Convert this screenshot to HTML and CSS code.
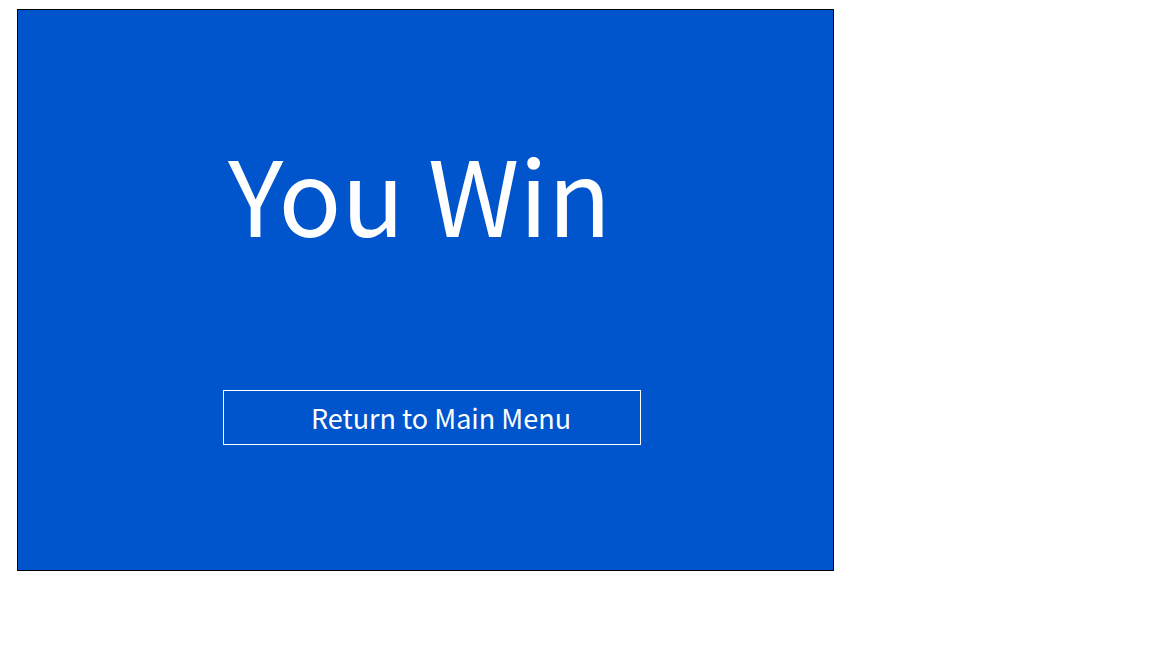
FILE: index.html
```html
<!DOCTYPE html>
<html>
<head>
<meta charset="utf-8">
<link rel="stylesheet" href="styles.css">
</head>
<body>
<div class="wrap">
  <div class="panel">
    <h1 class="title">You Win</h1>
    <button class="menu-btn">Return to Main Menu</button>
  </div>
</div>
</body>
</html>
```
FILE: styles.css
```css
html, body {
  margin: 0;
  padding: 0;
  background: #ffffff;
}
.wrap {
  padding: 9px 0 0 17px;
}
.panel {
  box-sizing: border-box;
  width: 817px;
  height: 562px;
  border: 1px solid #000000;
  background: #0055cc;
  display: flex;
  flex-direction: column;
  align-items: flex-start;
  padding: 130px 0 0 0;
  font-family: "Noto Sans CJK JP", "Noto Sans", sans-serif;
  color: #ffffff;
}
.title {
  margin: 0 0 0 210px;
  font-size: 104px;
  line-height: 104px;
  font-weight: 400;
}
.menu-btn {
  box-sizing: border-box;
  margin: 146px 0 0 205px;
  width: 418px;
  height: 55px;
  padding: 0 0 0 18px;
  border: 1px solid #ffffff;
  background: transparent;
  color: #ffffff;
  font-family: "Noto Sans CJK JP", "Noto Sans", sans-serif;
  font-size: 27px;
  line-height: 53px;
  text-align: center;
}
```
